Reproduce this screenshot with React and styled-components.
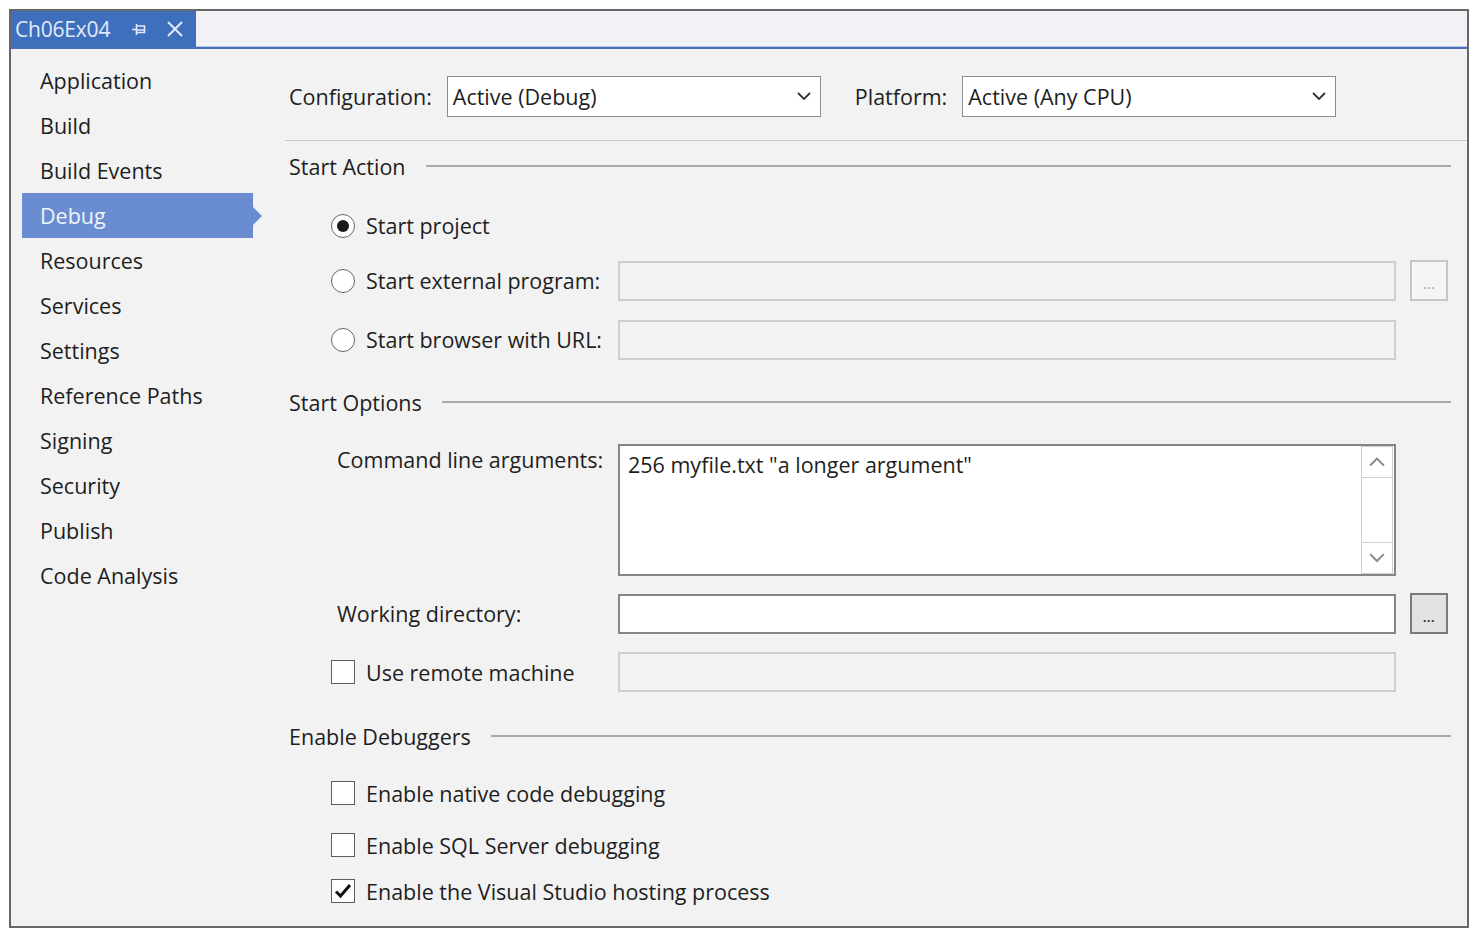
import styled, { createGlobalStyle } from "styled-components";

const GlobalStyle = createGlobalStyle`
  body {
    margin: 0;
    background: #ffffff;
    font-family: "Open Sans", "Noto Sans", sans-serif;
  }
`;

const Frame = styled.div`
  margin: 9px 0 0 9px;
  width: 1460px;
  height: 919px;
  box-sizing: border-box;
  border: 2px solid #676767;
  background: #f2f2f2;
  color: #1e1e1e;
  font-size: 21.5px;
  display: flex;
  flex-direction: column;
`;

const TabStrip = styled.div`
  height: 38px;
  box-sizing: border-box;
  background: #f2f2f6;
  border-bottom: 2px solid #4a70b4;
  box-shadow: inset 0 -1px 0 #b4c6e6;
  display: flex;
`;

const Tab = styled.div`
  width: 185px;
  height: 36px;
  background: #3e6fbd;
  color: #e2eaf7;
  display: flex;
  align-items: center;
  padding-left: 4px;
  box-sizing: border-box;
  font-size: 21px;
  letter-spacing: -0.2px;
`;

const TabIcon = styled.svg`
  margin-left: ${p => p.$ml}px;
  flex-shrink: 0;
`;

const Body = styled.div`
  flex: 1;
  display: flex;
`;

const Sidebar = styled.div`
  width: 274px;
  flex-shrink: 0;
  padding-top: 9px;
  display: flex;
  flex-direction: column;
`;

const NavItem = styled.div`
  position: relative;
  height: 45px;
  width: 231px;
  margin-left: 11px;
  padding-left: 18px;
  box-sizing: border-box;
  display: flex;
  align-items: center;
  background: ${p => (p.$active ? "#6a8cd0" : "transparent")};
  color: ${p => (p.$active ? "#f1f4fb" : "#1e1e1e")};

  &::after {
    content: "";
    display: ${p => (p.$active ? "block" : "none")};
    position: absolute;
    right: -9px;
    top: 50%;
    margin-top: -9px;
    border-left: 9px solid #6a8cd0;
    border-top: 9px solid transparent;
    border-bottom: 9px solid transparent;
  }
`;

const Main = styled.div`
  flex: 1;
  min-width: 0;
  display: flex;
  flex-direction: column;
`;

const HeaderBar = styled.div`
  padding: 27px 0 23px 4px;
  border-bottom: 1px solid #c9c9c9;
  display: flex;
  align-items: center;
`;

const HeaderLabel = styled.span`
  margin-left: ${p => p.$ml || 0}px;
  margin-right: 15px;
  white-space: nowrap;
`;

const Select = styled.div`
  width: 374px;
  flex-shrink: 0;
  height: 41px;
  box-sizing: border-box;
  border: 1px solid #8c8c8c;
  background: #ffffff;
  display: flex;
  align-items: center;
  justify-content: space-between;
  padding: 0 9px 0 5px;
`;

const Content = styled.div`
  padding: 0 16px 0 4px;
  display: flex;
  flex-direction: column;
`;

const SectionHeader = styled.div`
  height: 50px;
  margin-top: ${p => p.$mt || 0}px;
  display: flex;
  align-items: center;
`;

const Rule = styled.div`
  flex: 1;
  height: 2px;
  background: #a9a9a9;
  margin-left: 20px;
`;

const Row = styled.div`
  display: grid;
  grid-template-columns: 273px 778px 38px;
  column-gap: 14px;
  margin-left: 42px;
  margin-top: ${p => p.$mt}px;
  height: ${p => p.$h || 41}px;
  align-items: ${p => (p.$top ? "start" : "center")};
`;

const Choice = styled.label`
  display: flex;
  align-items: center;
  gap: 11px;
  white-space: nowrap;
`;

const Radio = styled.span`
  width: 24px;
  height: 24px;
  flex-shrink: 0;
  box-sizing: border-box;
  border-radius: 50%;
  border: 1.5px solid #666666;
  background: #ffffff;
  display: flex;
  align-items: center;
  justify-content: center;

  &::after {
    content: "";
    display: ${p => (p.$checked ? "block" : "none")};
    width: 12px;
    height: 12px;
    border-radius: 50%;
    background: #1a1a1a;
  }
`;

const Checkbox = styled.span`
  width: 24px;
  height: 24px;
  flex-shrink: 0;
  box-sizing: border-box;
  border: 1.5px solid #5e5e5e;
  background: #ffffff;
  display: flex;
  align-items: center;
  justify-content: center;
`;

const FieldLabel = styled.span`
  padding-left: 6px;
  line-height: 32px;
  white-space: nowrap;
`;

const TextBox = styled.div`
  height: ${p => p.$h || 40}px;
  box-sizing: border-box;
  border: ${p => (p.$disabled ? "2px solid #cdcdcd" : "2px solid #858585")};
  background: ${p => (p.$disabled ? "#f2f2f2" : "#ffffff")};
  display: flex;
`;

const AreaText = styled.div`
  flex: 1;
  padding: 4px 0 0 8px;
  line-height: 30px;
`;

const ScrollBar = styled.div`
  width: 30px;
  margin: 0 1px 0 0;
  border: 1px solid #cfcfcf;
  display: flex;
  flex-direction: column;
`;

const ScrollButton = styled.div`
  height: 30px;
  display: flex;
  align-items: center;
  justify-content: center;
  border-top: ${p => (p.$down ? "1px solid #cfcfcf" : "none")};
  border-bottom: ${p => (p.$down ? "none" : "1px solid #cfcfcf")};
`;

const Track = styled.div`
  flex: 1;
`;

const Browse = styled.div`
  width: 38px;
  height: 41px;
  box-sizing: border-box;
  border: 2px solid ${p => (p.$disabled ? "#c6c6c6" : "#7a7a7a")};
  background: ${p => (p.$disabled ? "#f5f5f5" : "#e2e2e2")};
  color: ${p => (p.$disabled ? "#b0b0b0" : "#2a2a2a")};
  display: flex;
  align-items: center;
  justify-content: center;
  font-size: 12px;
  font-weight: 700;
  letter-spacing: 0.5px;
  padding-top: 8px;
`;

const navItems = [
  "Application", "Build", "Build Events", "Debug", "Resources", "Services",
  "Settings", "Reference Paths", "Signing", "Security", "Publish", "Code Analysis",
];

const Chevron = ({ up, color = "#333", w = 14 }) => (
  <svg width={w} height={w * 0.6} viewBox="0 0 14 8.4">
    <path
      d={up ? "M1 7.4 L7 1.4 L13 7.4" : "M1 1 L7 7 L13 1"}
      fill="none"
      stroke={color}
      strokeWidth="1.8"
    />
  </svg>
);

const Check = () => (
  <svg width="18" height="16" viewBox="0 0 18 16">
    <path d="M2 8.5 L6.5 13 L16 2" fill="none" stroke="#111" strokeWidth="3" />
  </svg>
);

const App = () => (
  <>
    <GlobalStyle />
    <Frame>
      <TabStrip>
        <Tab>
          Ch06Ex04
          <TabIcon $ml={21} width="16" height="16" viewBox="0 0 16 16">
            <path d="M1 8.5 H5 M5.5 3 V14 M5.5 5 H13.5 V11.5 H5.5 M5.5 9 H13.5" fill="none" stroke="#e2eaf7" strokeWidth="1.6" />
          </TabIcon>
          <TabIcon $ml={19} width="18" height="18" viewBox="0 0 18 18">
            <path d="M2 2 L16 16 M16 2 L2 16" fill="none" stroke="#e2eaf7" strokeWidth="2" />
          </TabIcon>
        </Tab>
      </TabStrip>
      <Body>
        <Sidebar>
          {navItems.map(item => (
            <NavItem key={item} $active={item === "Debug"}>{item}</NavItem>
          ))}
        </Sidebar>
        <Main>
          <HeaderBar>
            <HeaderLabel>Configuration:</HeaderLabel>
            <Select>
              Active (Debug)
              <Chevron />
            </Select>
            <HeaderLabel $ml={34}>Platform:</HeaderLabel>
            <Select>
              Active (Any CPU)
              <Chevron />
            </Select>
          </HeaderBar>
          <Content>
            <SectionHeader>
              Start Action
              <Rule />
            </SectionHeader>
            <Row $mt={14}>
              <Choice><Radio $checked />Start project</Choice>
            </Row>
            <Row $mt={14}>
              <Choice><Radio />Start external program:</Choice>
              <TextBox $disabled />
              <Browse $disabled>...</Browse>
            </Row>
            <Row $mt={18}>
              <Choice><Radio />Start browser with URL:</Choice>
              <TextBox $disabled />
            </Row>
            <SectionHeader $mt={17}>
              Start Options
              <Rule />
            </SectionHeader>
            <Row $mt={17} $h={132} $top>
              <FieldLabel>Command line arguments:</FieldLabel>
              <TextBox $h={132}>
                <AreaText>256 myfile.txt "a longer argument"</AreaText>
                <ScrollBar>
                  <ScrollButton><Chevron up color="#8a8a8a" w={16} /></ScrollButton>
                  <Track />
                  <ScrollButton $down><Chevron color="#8a8a8a" w={16} /></ScrollButton>
                </ScrollBar>
              </TextBox>
            </Row>
            <Row $mt={17}>
              <FieldLabel>Working directory:</FieldLabel>
              <TextBox />
              <Browse>...</Browse>
            </Row>
            <Row $mt={18} $h={40}>
              <Choice><Checkbox />Use remote machine</Choice>
              <TextBox $disabled />
            </Row>
            <SectionHeader $mt={19}>
              Enable Debuggers
              <Rule />
            </SectionHeader>
            <Row $mt={12} $h={40}>
              <Choice><Checkbox />Enable native code debugging</Choice>
            </Row>
            <Row $mt={12} $h={40}>
              <Choice><Checkbox />Enable SQL Server debugging</Choice>
            </Row>
            <Row $mt={6} $h={40}>
              <Choice><Checkbox><Check /></Checkbox>Enable the Visual Studio hosting process</Choice>
            </Row>
          </Content>
        </Main>
      </Body>
    </Frame>
  </>
);

export default App;
